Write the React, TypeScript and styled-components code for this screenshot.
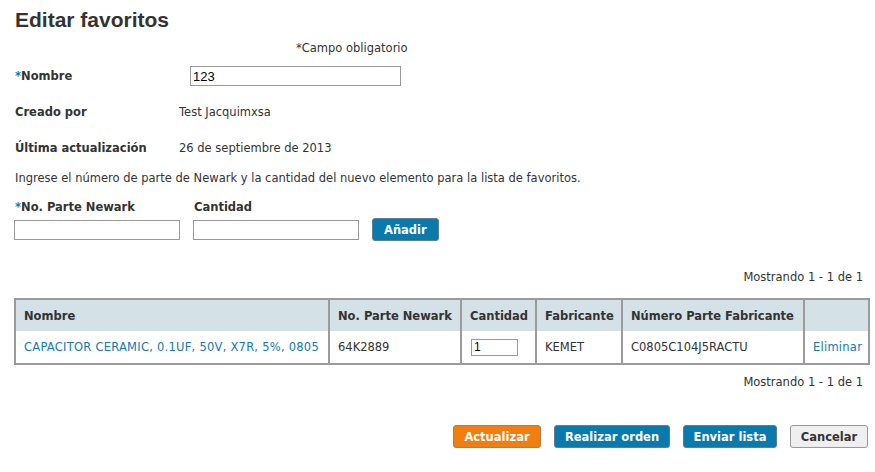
import React from "react";
import styled, { createGlobalStyle } from "styled-components";

const GlobalStyle = createGlobalStyle`
  body {
    margin: 0;
    background: #fff;
    font-family: "DejaVu Sans", Verdana, sans-serif;
    font-size: 11.5px;
    color: #333;
  }
`;

const Page = styled.div`
  width: 875px;
  height: 472px;
  box-sizing: border-box;
  padding: 8px 7px 0 14px;
`;

const Title = styled.h1`
  margin: 0 0 0 1px;
  font-family: "Liberation Sans", Arial, sans-serif;
  font-size: 21px;
  font-weight: bold;
  color: #333;
  line-height: 24px;
`;

const Required = styled.div`
  margin: 9px 0 0 282px;
  line-height: 14px;
`;

const Star = styled.span`
  color: #1479b0;
`;

const InfoGrid = styled.div`
  display: grid;
  grid-template-columns: 164px 1fr;
  grid-auto-rows: 36px;
  align-items: center;
  margin-top: 3px;
  padding-left: 1px;
`;

const Label = styled.div`
  font-weight: bold;
`;

const Value = styled.div``;

const TextInput = styled.input<{ $w: number }>`
  width: ${({ $w }) => $w}px;
  height: 20px;
  box-sizing: border-box;
  border: 1px solid #999;
  padding: 0 2px;
  font-family: "Liberation Sans", Arial, sans-serif;
  font-size: 13px;
  color: #000;
  outline: none;
`;

const NameInput = styled(TextInput)`
  margin-left: 11px;
`;

const Intro = styled.p`
  margin: 5px 0 0 1px;
  line-height: 14px;
`;

const AddRow = styled.div`
  display: flex;
  align-items: flex-end;
  gap: 13px;
  margin-top: 15px;
`;

const Field = styled.div`
  display: flex;
  flex-direction: column;
  gap: 6px;
`;

const FieldLabel = styled.label`
  font-weight: bold;
  line-height: 14px;
  padding-left: 1px;
`;

const Button = styled.button<{ $tone: "blue" | "orange" | "gray"; $w?: number }>`
  height: 23px;
  width: ${({ $w }) => ($w ? `${$w}px` : "auto")};
  box-sizing: border-box;
  padding: 0 11px;
  border-radius: 3px;
  font-family: "DejaVu Sans", Verdana, sans-serif;
  font-size: 11.5px;
  font-weight: bold;
  cursor: pointer;
  border: 1px solid
    ${({ $tone }) => ($tone === "blue" ? "#5c7f92" : $tone === "orange" ? "#b87a44" : "#999")};
  background: ${({ $tone }) =>
    $tone === "blue" ? "#0a7aad" : $tone === "orange" ? "#f07e10" : "#efefef"};
  color: ${({ $tone }) => ($tone === "gray" ? "#333" : "#fff")};
`;

const AddButton = styled(Button)`
  margin-bottom: -1px;
`;

const Counter = styled.div`
  text-align: right;
  line-height: 14px;
  padding-right: 5px;
`;

const TopCounter = styled(Counter)`
  margin-top: 30px;
`;

const BottomCounter = styled(Counter)`
  margin-top: 10px;
`;

const Table = styled.table`
  width: 854px;
  margin-top: 14px;
  table-layout: fixed;
  border-collapse: collapse;
  border: 2px solid #9b9b9b;
`;

const Th = styled.th`
  height: 32px;
  box-sizing: border-box;
  background: #d4e1e6;
  text-align: left;
  padding: 0 8px;
  font-weight: bold;
  border-left: 2px solid #9b9b9b;
  white-space: nowrap;
`;

const Td = styled.td`
  height: 33px;
  box-sizing: border-box;
  padding: 0 8px;
  border-left: 2px solid #9b9b9b;
  white-space: nowrap;
`;

const Link = styled.a`
  color: #1479b0;
  text-decoration: none;
  letter-spacing: 0.25px;
`;

const QtyInput = styled(TextInput)`
  height: 17px;
  margin-left: 1px;
  font-size: 12px;
`;

const Actions = styled.div`
  display: flex;
  justify-content: flex-end;
  gap: 13px;
  margin-top: 36px;
`;

const ActionButton = styled(Button)`
  padding: 0;
`;

const columns = [
  { label: "Nombre", width: 314 },
  { label: "No. Parte Newark", width: 132 },
  { label: "Cantidad", width: 75 },
  { label: "Fabricante", width: 86 },
  { label: "Número Parte Fabricante", width: 182 },
  { label: "", width: 65 },
];

export default function App() {
  return (
    <Page>
      <GlobalStyle />
      <Title>Editar favoritos</Title>
      <Required>*Campo obligatorio</Required>
      <InfoGrid>
        <Label>
          <Star>*</Star>Nombre
        </Label>
        <Value>
          <NameInput $w={211} defaultValue="123" />
        </Value>
        <Label>Creado por</Label>
        <Value>Test Jacquimxsa</Value>
        <Label>Última actualización</Label>
        <Value>26 de septiembre de 2013</Value>
      </InfoGrid>
      <Intro>
        Ingrese el número de parte de Newark y la cantidad del nuevo elemento para la lista de favoritos.
      </Intro>
      <AddRow>
        <Field>
          <FieldLabel>
            <Star>*</Star>No. Parte Newark
          </FieldLabel>
          <TextInput $w={166} />
        </Field>
        <Field>
          <FieldLabel>Cantidad</FieldLabel>
          <TextInput $w={166} />
        </Field>
        <AddButton $tone="blue">Añadir</AddButton>
      </AddRow>
      <TopCounter>Mostrando 1 - 1 de 1</TopCounter>
      <Table>
        <colgroup>
          {columns.map((c, i) => (
            <col key={i} style={{ width: c.width }} />
          ))}
        </colgroup>
        <thead>
          <tr>
            {columns.map((c, i) => (
              <Th key={i}>{c.label}</Th>
            ))}
          </tr>
        </thead>
        <tbody>
          <tr>
            <Td>
              <Link href="#">CAPACITOR CERAMIC, 0.1UF, 50V, X7R, 5%, 0805</Link>
            </Td>
            <Td>64K2889</Td>
            <Td>
              <QtyInput $w={47} defaultValue="1" />
            </Td>
            <Td>KEMET</Td>
            <Td>C0805C104J5RACTU</Td>
            <Td>
              <Link href="#">Eliminar</Link>
            </Td>
          </tr>
        </tbody>
      </Table>
      <BottomCounter>Mostrando 1 - 1 de 1</BottomCounter>
      <Actions>
        <ActionButton $tone="orange" $w={88}>Actualizar</ActionButton>
        <ActionButton $tone="blue" $w={116}>Realizar orden</ActionButton>
        <ActionButton $tone="blue" $w={94}>Enviar lista</ActionButton>
        <ActionButton $tone="gray" $w={78}>Cancelar</ActionButton>
      </Actions>
    </Page>
  );
}
